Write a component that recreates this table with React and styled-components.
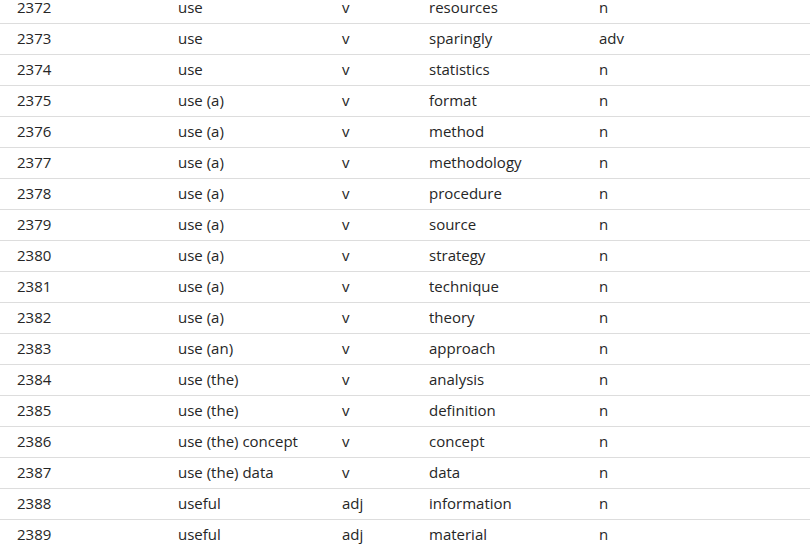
import React from "react";
import styled, { createGlobalStyle } from "styled-components";

const Global = createGlobalStyle`
  html, body { margin: 0; padding: 0; background: #fff; overflow: hidden; }
  body { font-family: "Open Sans", "Noto Sans", sans-serif; color: #222; }
`;

const Table = styled.div`
  width: 810px;
  margin-top: -7px;
  display: flex;
  flex-direction: column;
`;

const Row = styled.div`
  display: grid;
  grid-template-columns: 161px 164px 87px 170px 1fr;
  height: 30px;
  padding-left: 17px;
  align-items: center;
  border-bottom: 1px solid #dddddd;
`;

const Cell = styled.div`
  font-size: 15px;
  line-height: 20px;
  padding-bottom: 2px;
  color: #262626;
  white-space: nowrap;
`;

const rows = [
  [2372, "use", "v", "resources", "n"],
  [2373, "use", "v", "sparingly", "adv"],
  [2374, "use", "v", "statistics", "n"],
  [2375, "use (a)", "v", "format", "n"],
  [2376, "use (a)", "v", "method", "n"],
  [2377, "use (a)", "v", "methodology", "n"],
  [2378, "use (a)", "v", "procedure", "n"],
  [2379, "use (a)", "v", "source", "n"],
  [2380, "use (a)", "v", "strategy", "n"],
  [2381, "use (a)", "v", "technique", "n"],
  [2382, "use (a)", "v", "theory", "n"],
  [2383, "use (an)", "v", "approach", "n"],
  [2384, "use (the)", "v", "analysis", "n"],
  [2385, "use (the)", "v", "definition", "n"],
  [2386, "use (the) concept", "v", "concept", "n"],
  [2387, "use (the) data", "v", "data", "n"],
  [2388, "useful", "adj", "information", "n"],
  [2389, "useful", "adj", "material", "n"],
];

export default function App() {
  return (
    <>
      <Global />
      <Table>
        {rows.map((r) => (
          <Row key={r[0]}>
            {r.map((c, i) => (
              <Cell key={i}>{c}</Cell>
            ))}
          </Row>
        ))}
      </Table>
    </>
  );
}
